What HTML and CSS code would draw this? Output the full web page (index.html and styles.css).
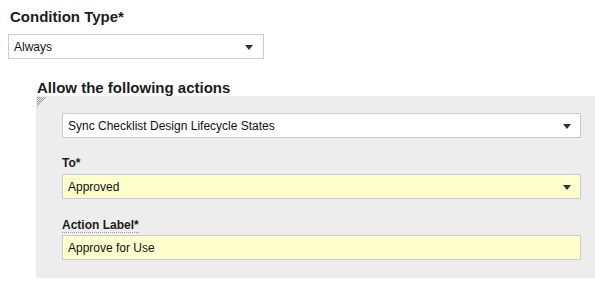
FILE: index.html
```html
<!DOCTYPE html>
<html lang="en">
  <head>
    <meta charset="UTF-8" />
    <title>Condition</title>
    <link rel="stylesheet" href="styles.css">
  </head>
  <body>
    <div class="form">
      <label class="title">Condition Type*</label>
      <div class="select small">
        <span>Always</span>
        <span class="arrow"></span>
      </div>

      <div class="section">
        <div class="title">Allow the following actions</div>
        <div class="panel">
          <svg class="grip" width="10" height="10" viewBox="0 0 10 10">
            <g fill="#9a9a9a">
              <rect x="0" y="0" width="1" height="1" /><rect x="2" y="0" width="1" height="1" /><rect x="4" y="0" width="1" height="1" /><rect x="6" y="0" width="1" height="1" /><rect x="8" y="0" width="1" height="1" />
              <rect x="1" y="1" width="1" height="1" /><rect x="3" y="1" width="1" height="1" /><rect x="5" y="1" width="1" height="1" /><rect x="7" y="1" width="1" height="1" />
              <rect x="0" y="2" width="1" height="1" /><rect x="2" y="2" width="1" height="1" /><rect x="4" y="2" width="1" height="1" /><rect x="6" y="2" width="1" height="1" />
              <rect x="1" y="3" width="1" height="1" /><rect x="3" y="3" width="1" height="1" /><rect x="5" y="3" width="1" height="1" />
              <rect x="0" y="4" width="1" height="1" /><rect x="2" y="4" width="1" height="1" /><rect x="4" y="4" width="1" height="1" />
              <rect x="1" y="5" width="1" height="1" /><rect x="3" y="5" width="1" height="1" />
              <rect x="0" y="6" width="1" height="1" /><rect x="2" y="6" width="1" height="1" />
              <rect x="1" y="7" width="1" height="1" />
              <rect x="0" y="8" width="1" height="1" />
            </g>
          </svg>

          <div class="select">
            <span>Sync Checklist Design Lifecycle States</span>
            <span class="arrow"></span>
          </div>

          <label class="label">To*</label>
          <div class="select required">
            <span>Approved</span>
            <span class="arrow"></span>
          </div>

          <label class="label dotted">Action Label*</label>
          <div class="input required">Approve for Use</div>
        </div>
      </div>
    </div>
  </body>
</html>
```

FILE: styles.css
```css
* {
  margin: 0;
  padding: 0;
  box-sizing: border-box;
}

body {
  font-family: "Liberation Sans", Arial, sans-serif;
  color: #1c1c1c;
  background: #fff;
}

.form {
  padding: 8px 0 0 8px;
}

.title {
  display: block;
  font-size: 15px;
  font-weight: bold;
  line-height: 17px;
  margin-left: 2px;
}

.select,
.input {
  display: flex;
  align-items: center;
  justify-content: space-between;
  height: 25px;
  padding: 0 9px 0 5px;
  font-size: 12px;
  color: #111;
  background: #fff;
  border: 1px solid #cccccc;
}

.select.small {
  width: 256px;
  margin-top: 9px;
  padding-right: 10px;
}

.required {
  background: #ffffcc;
}

.arrow {
  width: 0;
  height: 0;
  margin-top: 2px;
  border-left: 4px solid transparent;
  border-right: 4px solid transparent;
  border-top: 5px solid #333;
}

.section {
  margin: 20px 0 0 28px;
}

.section .title {
  margin-left: 1px;
}

.panel {
  position: relative;
  background: #ededed;
  padding: 17px 14px 18px 26px;
}

.grip {
  position: absolute;
  top: 1px;
  left: 1px;
}

.label {
  display: block;
  width: max-content;
  font-size: 12px;
  font-weight: bold;
  line-height: 14px;
  margin: 18px 0 4px;
}

.label.dotted {
  margin: 19px 0 2px;
  border-bottom: 1px dotted #999;
}
```
